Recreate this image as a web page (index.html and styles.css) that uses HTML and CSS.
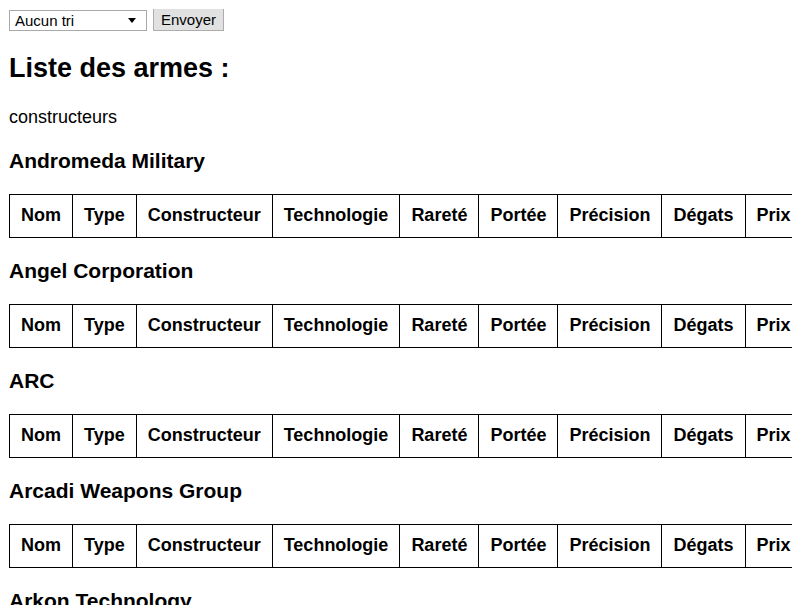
FILE: index.html
```html
<!DOCTYPE html>
<html lang="fr">
<head>
    <meta charset="UTF-8">
    <title>Liste des armes</title>
    <link rel="stylesheet" href="styles.css">
</head>
<body>
    <form class="tri-form" method="get">
        <span class="tri-select-wrap">
            <select name="tri" class="tri-select">
                <option>Aucun tri</option>
            </select>
        </span>
        <input type="submit" value="Envoyer" class="tri-button">
    </form>

    <h2>Liste des armes :</h2>
    <p>constructeurs</p>

    <h3>Andromeda Military</h3>
    <table class="armes">
        <tr><th>Nom</th><th>Type</th><th>Constructeur</th><th>Technologie</th><th>Rareté</th><th>Portée</th><th>Précision</th><th>Dégats</th><th>Prix</th></tr>
    </table>

    <h3>Angel Corporation</h3>
    <table class="armes">
        <tr><th>Nom</th><th>Type</th><th>Constructeur</th><th>Technologie</th><th>Rareté</th><th>Portée</th><th>Précision</th><th>Dégats</th><th>Prix</th></tr>
    </table>

    <h3>ARC</h3>
    <table class="armes">
        <tr><th>Nom</th><th>Type</th><th>Constructeur</th><th>Technologie</th><th>Rareté</th><th>Portée</th><th>Précision</th><th>Dégats</th><th>Prix</th></tr>
    </table>

    <h3>Arcadi Weapons Group</h3>
    <table class="armes">
        <tr><th>Nom</th><th>Type</th><th>Constructeur</th><th>Technologie</th><th>Rareté</th><th>Portée</th><th>Précision</th><th>Dégats</th><th>Prix</th></tr>
    </table>

    <h3>Arkon Technology</h3>
    <table class="armes">
        <tr><th>Nom</th><th>Type</th><th>Constructeur</th><th>Technologie</th><th>Rareté</th><th>Portée</th><th>Précision</th><th>Dégats</th><th>Prix</th></tr>
    </table>
</body>
</html>
```

FILE: styles.css
```css
body {
    font-family: "Liberation Sans", Arial, sans-serif;
    font-size: 18px;
    margin: 9px 0 9px 9px;
    color: #000;
    background: #fff;
}

.tri-form {
    display: flex;
    align-items: center;
    gap: 6px;
    height: 22px;
}

.tri-select-wrap {
    position: relative;
    display: inline-block;
}

/* petite fleche noire du select */
.tri-select-wrap::after {
    content: "";
    position: absolute;
    right: 11px;
    top: 8px;
    border-left: 4px solid transparent;
    border-right: 4px solid transparent;
    border-top: 5px solid #000;
    pointer-events: none;
}

.tri-select {
    appearance: none;
    -webkit-appearance: none;
    display: block;
    font-family: "Liberation Sans", Arial, sans-serif;
    font-size: 15px;
    width: 138px;
    height: 21px;
    padding: 0 0 0 5px;
    border: 1px solid #a9a9a9;
    border-radius: 0;
    background: #fff;
    color: #000;
}

.tri-button {
    font-family: "Liberation Sans", Arial, sans-serif;
    font-size: 15px;
    height: 24px;
    margin-top: -2px;
    padding: 0 7px;
    border: 1px solid #adadad;
    border-radius: 0;
    background: #e1e1e1;
    color: #000;
}

h2 {
    font-size: 27px;
}

h3 {
    font-size: 21px;
}

.armes {
    border-collapse: collapse;
}

.armes th {
    border: 1px solid #000;
    padding: 10.5px 11px;
    font-size: 18px;
    white-space: nowrap;
}
```
